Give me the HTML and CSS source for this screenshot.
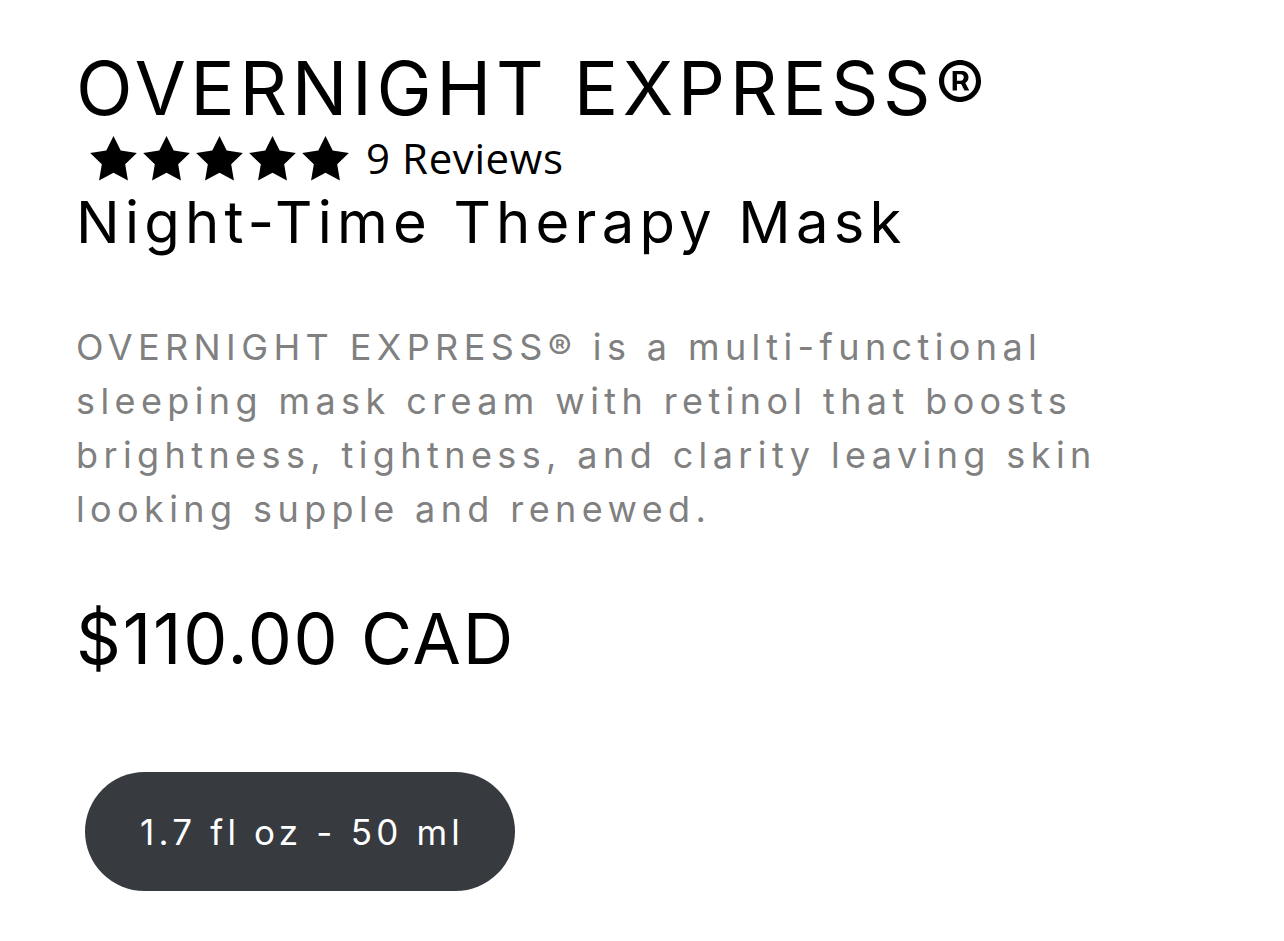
FILE: index.html
```html
<!DOCTYPE html>
<html lang="en">
<head>
<meta charset="utf-8">
<title>Overnight Express</title>
<link rel="stylesheet" href="styles.css">
</head>
<body>
<main class="product">
  <h1 class="title">OVERNIGHT EXPRESS®</h1>
  <div class="rating">
    <div class="stars" aria-label="5 stars">
      <svg class="star" viewBox="2 2 20 19.27"><path d="M12 2l3.09 6.26L22 9.27l-5 4.87 1.18 6.88L12 17.77l-6.18 3.25L7 14.14 2 9.27l6.91-1.01L12 2z"/></svg>
      <svg class="star" viewBox="2 2 20 19.27"><path d="M12 2l3.09 6.26L22 9.27l-5 4.87 1.18 6.88L12 17.77l-6.18 3.25L7 14.14 2 9.27l6.91-1.01L12 2z"/></svg>
      <svg class="star" viewBox="2 2 20 19.27"><path d="M12 2l3.09 6.26L22 9.27l-5 4.87 1.18 6.88L12 17.77l-6.18 3.25L7 14.14 2 9.27l6.91-1.01L12 2z"/></svg>
      <svg class="star" viewBox="2 2 20 19.27"><path d="M12 2l3.09 6.26L22 9.27l-5 4.87 1.18 6.88L12 17.77l-6.18 3.25L7 14.14 2 9.27l6.91-1.01L12 2z"/></svg>
      <svg class="star" viewBox="2 2 20 19.27"><path d="M12 2l3.09 6.26L22 9.27l-5 4.87 1.18 6.88L12 17.77l-6.18 3.25L7 14.14 2 9.27l6.91-1.01L12 2z"/></svg>
    </div>
    <span class="reviews">9 Reviews</span>
  </div>
  <h2 class="subtitle">Night-Time Therapy Mask</h2>
  <p class="description">OVERNIGHT EXPRESS® is a multi-functional sleeping mask cream with retinol that boosts brightness, tightness, and clarity leaving skin looking supple and renewed.</p>
  <p class="price">$110.00 CAD</p>
  <div class="variants">
    <button class="variant" type="button">1.7 fl oz - 50 ml</button>
  </div>
</main>
</body>
</html>
```
FILE: styles.css
```css
* { box-sizing: border-box; }
html, body { margin: 0; padding: 0; background: #fff; }
body { font-family: "Inter", "Open Sans", sans-serif; color: #000; }

.product {
  display: flex;
  flex-direction: column;
  align-items: flex-start;
  padding: 51px 0 0 76px;
  width: 1160px;
}

.title {
  margin: 0;
  font-size: 74px;
  font-weight: 400;
  line-height: 1;
  letter-spacing: 4.6px;
}

.rating {
  display: flex;
  align-items: center;
  margin-top: 10px;
  padding-left: 14px;
  height: 46px;
}
.stars { display: flex; gap: 6px; }
.star { width: 47px; height: 45px; fill: #000; display: block; }
.reviews {
  font-family: "Open Sans", sans-serif;
  font-size: 42px;
  letter-spacing: 0.6px;
  margin-left: 17px;
  line-height: 1;
}

.subtitle {
  margin: 12px 0 0;
  font-size: 58px;
  font-weight: 400;
  line-height: 1;
  letter-spacing: 5.2px;
}

.description {
  margin: 69px 0 0;
  font-size: 36px;
  line-height: 54px;
  color: #808080;
  letter-spacing: 5.4px;
  width: 1040px;
}

.price {
  margin: 68px 0 0;
  font-size: 70px;
  line-height: 1;
  letter-spacing: 1.8px;
}

.variants { margin-top: 98px; padding-left: 9px; }
.variant {
  background: #373b3f;
  color: #fff;
  border: none;
  border-radius: 60px;
  width: 430px;
  height: 119px;
  font-family: "Inter", sans-serif;
  font-size: 35px;
  letter-spacing: 4.2px;
  padding: 0 0 0 4px;
}
```
